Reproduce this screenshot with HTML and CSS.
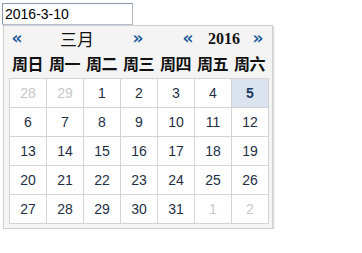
FILE: index.html
```html
<!DOCTYPE html>
<html>
<head>
<meta charset="utf-8">
<link rel="stylesheet" href="styles.css">
</head>
<body>
<input class="date-input" type="text" value="2016-3-10">
<div class="picker">
  <div class="nav">
    <span class="arr a1">«</span>
    <span class="month">三月</span>
    <span class="arr a2">»</span>
    <span class="arr a3">«</span>
    <span class="year">2016</span>
    <span class="arr a4">»</span>
  </div>
  <div class="weekdays">
    <span>周日</span><span>周一</span><span>周二</span><span>周三</span><span>周四</span><span>周五</span><span>周六</span>
  </div>
  <div class="days">
    <span class="other">28</span><span class="other">29</span><span>1</span><span>2</span><span>3</span><span>4</span><span class="sel">5</span>
    <span>6</span><span>7</span><span>8</span><span>9</span><span>10</span><span>11</span><span>12</span>
    <span>13</span><span>14</span><span>15</span><span>16</span><span>17</span><span>18</span><span>19</span>
    <span>20</span><span>21</span><span>22</span><span>23</span><span>24</span><span>25</span><span>26</span>
    <span>27</span><span>28</span><span>29</span><span>30</span><span>31</span><span class="other">1</span><span class="other">2</span>
  </div>
</div>
</body>
</html>
```
FILE: styles.css
```css
html, body {
  margin: 0;
  padding: 0;
  background: #fff;
}
body {
  padding: 3px 0 0 2px;
}
.date-input {
  display: block;
  box-sizing: border-box;
  width: 131px;
  height: 22px;
  margin: 0;
  padding: 0 2px;
  border: 1px solid #7f9db9;
  border-color: #8a9aae #a8b4c4 #b8c2cf #8a9aae;
  font-family: "Liberation Sans", Arial, sans-serif;
  font-size: 14px;
  color: #000;
  outline: none;
}
.picker {
  box-sizing: border-box;
  width: 270px;
  margin-left: 1px;
  padding: 0 3px 4px 5px;
  background: #f4f4f4;
  border: 1px solid #cfcfcf;
  box-shadow: 1px 1px 2px rgba(0,0,0,0.18);
}
.nav {
  display: flex;
  height: 25px;
  align-items: center;
}
.arr {
  color: #1d5a99;
  font-family: "DejaVu Sans", sans-serif;
  font-weight: bold;
  font-size: 17px;
  line-height: 1;
  text-align: center;
}
.a1 { width: 16px; }
.month {
  width: 104px;
  text-align: center;
  font-family: "Noto Sans CJK SC", sans-serif;
  font-size: 17px;
  color: #111;
}
.a2 { width: 18px; }
.a3 { width: 18px; margin-left: 32px; }
.year {
  width: 54px;
  text-align: center;
  font-family: "Liberation Serif", "Times New Roman", serif;
  font-weight: bold;
  font-size: 16px;
  color: #111;
}
.a4 { width: 14px; }
.weekdays {
  display: grid;
  grid-template-columns: repeat(7, 37px);
  height: 24px;
  align-items: center;
  padding-bottom: 3px;
}
.weekdays span {
  text-align: center;
  font-family: "Noto Sans CJK SC", sans-serif;
  font-weight: bold;
  font-size: 16px;
  letter-spacing: -0.5px;
  color: #111;
}
.days {
  display: grid;
  grid-template-columns: repeat(7, 37px);
  grid-auto-rows: 29px;
  width: 260px;
  box-sizing: border-box;
  border-top: 1px solid #d4d4d4;
  border-left: 1px solid #d4d4d4;
  background: #fff;
}
.days span {
  display: flex;
  align-items: center;
  justify-content: center;
  border-right: 1px solid #d4d4d4;
  border-bottom: 1px solid #d4d4d4;
  font-family: "Liberation Sans", Arial, sans-serif;
  font-size: 14px;
  color: #1e2f45;
}
.days span.other {
  color: #c6c6c6;
}
.days span.sel {
  background: #dbe4ee;
  font-weight: bold;
  color: #1e3a5f;
}
```
